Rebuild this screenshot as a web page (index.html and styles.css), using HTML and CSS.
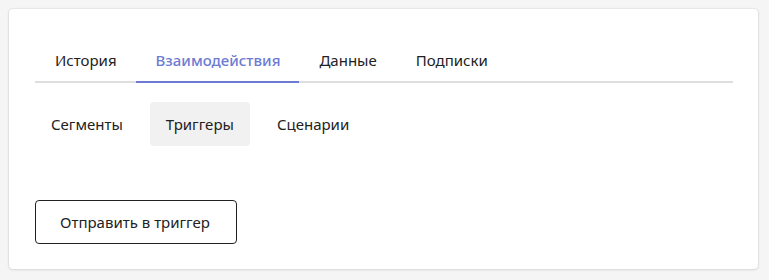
FILE: index.html
```html
<!DOCTYPE html>
<html lang="ru">
<head>
    <meta charset="UTF-8">
    <meta name="viewport" content="width=device-width, initial-scale=1.0">
    <title>Профиль клиента</title>
    <link rel="stylesheet" href="styles.css">
</head>
<body>
    <div class="card">
        <nav class="tabs">
            <a class="tab">История</a>
            <a class="tab active">Взаимодействия</a>
            <a class="tab">Данные</a>
            <a class="tab">Подписки</a>
        </nav>
        <div class="subtabs">
            <a class="pill">Сегменты</a>
            <a class="pill active">Триггеры</a>
            <a class="pill">Сценарии</a>
        </div>
        <button type="button" class="btn">Отправить в триггер</button>
    </div>
</body>
</html>
```

FILE: styles.css
```css
body {
    font-family: "Noto Sans", "Open Sans", sans-serif;
    margin: 0;
    padding: 9px 11px 11px 9px;
    background: #f5f5f5;
    color: #222;
}

.card {
    background: #fff;
    border-radius: 4px;
    box-shadow: 0 0 2px rgba(0, 0, 0, 0.18), 0 1px 3px rgba(0, 0, 0, 0.08);
    padding: 24px 25px 25px 26px;
}

.tabs {
    display: flex;
    border-bottom: 2px solid #dedede;
}

.tab {
    font-size: 15px;
    line-height: 24px;
    padding: 15px 19px 9px 20px;
    margin-bottom: -2px;
    border-bottom: 2px solid transparent;
    cursor: pointer;
}

.tab.active {
    color: #6d7bd3;
    font-weight: 500;
    border-bottom-color: #6d7bd3;
}

.subtabs {
    display: flex;
    gap: 11px;
    margin-top: 19px;
}

.pill {
    font-size: 15px;
    line-height: 24px;
    padding: 10px 16px;
    border-radius: 4px;
    cursor: pointer;
}

.pill.active {
    background: #f1f1f1;
}

.btn {
    display: block;
    margin-top: 54px;
    font-family: inherit;
    font-size: 15px;
    line-height: 24px;
    padding: 9px 26px 9px 24px;
    background: #fff;
    color: #222;
    border: 1px solid #222;
    border-radius: 4px;
    cursor: pointer;
}
```
